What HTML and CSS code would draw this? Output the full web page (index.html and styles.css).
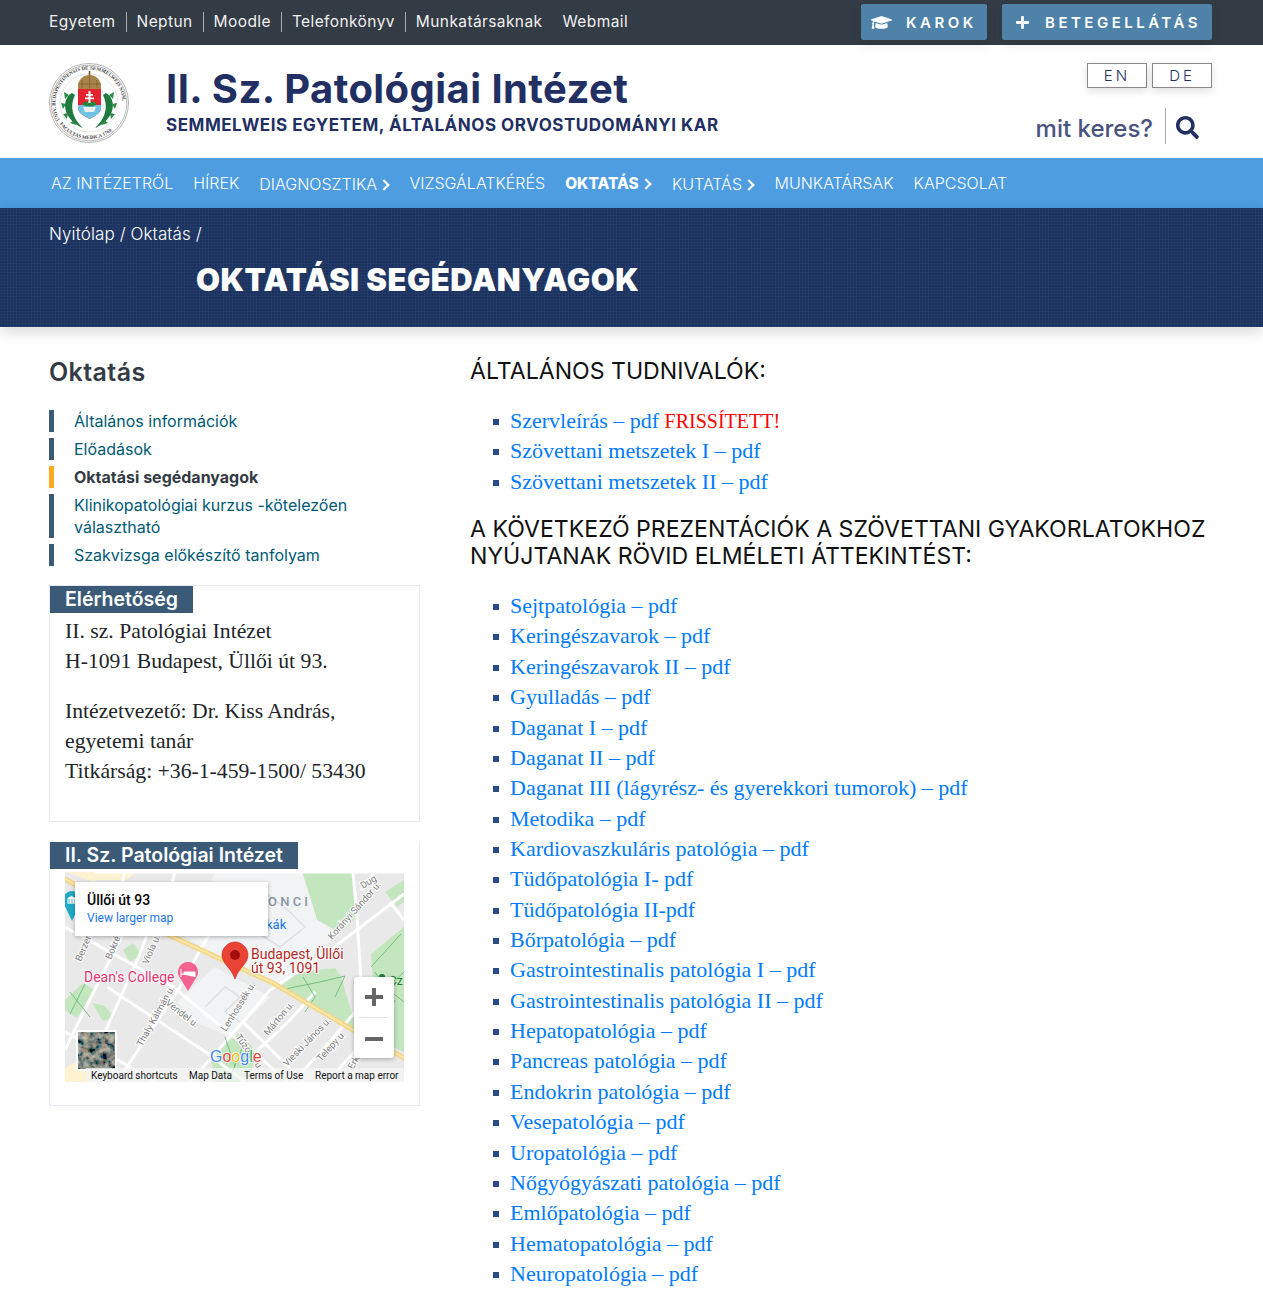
FILE: index.html
```html
<!DOCTYPE html>
<html lang="hu">
<head>
    <meta charset="utf-8">
    <title>Oktatási segédanyagok - II. Sz. Patológiai Intézet</title>
    <link rel="stylesheet" href="styles.css">
</head>
<body>

<div class="topbar">
    <ul class="toplinks">
        <li class="sep"><a href="#">Egyetem</a></li>
        <li class="sep"><a href="#">Neptun</a></li>
        <li class="sep"><a href="#">Moodle</a></li>
        <li class="sep"><a href="#">Telefonkönyv</a></li>
        <li><a href="#">Munkatársaknak</a></li>
        <li><a href="#">Webmail</a></li>
    </ul>
    <div class="topbtns">
        <a class="topbtn btn-karok" href="#">
            <svg class="cap" viewBox="0 0 640 512"><path fill="#fff" d="M622.34 153.2L343.4 67.5c-15.2-4.67-31.6-4.67-46.79 0L17.66 153.2c-23.54 7.23-23.54 38.36 0 45.59l48.63 14.94c-10.67 13.19-17.23 29.28-17.88 46.9C38.78 266.15 32 276.11 32 288c0 10.78 5.68 19.85 13.86 25.65L20.33 428.53C18.11 438.52 25.71 448 35.94 448h56.11c10.24 0 17.84-9.48 15.62-19.47L82.14 313.65C90.32 307.85 96 298.78 96 288c0-11.57-6.47-21.25-15.66-26.87.76-15.02 8.44-28.3 20.69-36.72L296.6 284.5c9.06 2.78 26.44 6.25 46.79 0l278.95-85.7c23.55-7.24 23.55-38.36 0-45.6zM352.79 315.09c-28.53 8.76-52.84 3.92-65.59 0l-145.02-44.55L128 384c0 35.35 85.96 64 192 64s192-28.65 192-64l-14.18-113.47-145.03 44.56z"/></svg>
            KAROK
        </a>
        <a class="topbtn btn-beteg" href="#">
            <svg class="plus" viewBox="0 0 448 512"><path fill="#fff" d="M416 208H272V64c0-17.67-14.33-32-32-32h-32c-17.67 0-32 14.33-32 32v144H32c-17.67 0-32 14.33-32 32v32c0 17.67 14.33 32 32 32h144v144c0 17.67 14.33 32 32 32h32c17.67 0 32-14.33 32-32V304h144c17.67 0 32-14.33 32-32v-32c0-17.67-14.33-32-32-32z"/></svg>
            BETEGELLÁTÁS
        </a>
    </div>
</div>

<header class="site-head">
    <svg class="crest" viewBox="0 0 80 80">
        <defs>
            <path id="ringtop" d="M11.750 58 A33.500 33.500 0 1 1 68.250 58"/>
            <path id="ringbot" d="M9.400 59 A36 36 0 0 0 70.600 59"/>
        </defs>
        <circle cx="40" cy="40" r="39.500" fill="#fff" stroke="#b5b5b5" stroke-width="1"/>
        <circle cx="40" cy="40" r="37.800" fill="none" stroke="#888" stroke-width=".6"/>
        <circle cx="40" cy="40" r="29" fill="none" stroke="#ccc" stroke-width=".5"/>
        <text class="crest-text"><textPath href="#ringtop" startOffset="1%">UNIV. BUDAPESTINENSIS DE SEMMELWEIS NOM.</textPath></text>
        <text class="crest-text"><textPath href="#ringbot" startOffset="3%">FACULTAS MEDICA 1769</textPath></text>
        <!-- koszoru -->
        <path d="M23 30 C12 36 13 56 34 65 C24 56 20 44 26 32z" fill="#1f7a3d"/>
        <path d="M57 30 C68 36 67 56 46 65 C56 56 60 44 54 32z" fill="#1f7a3d"/>
        <path d="M20 32l-5-3 1 7zM17 41l-5-1 2 6zM19 50l-5 1 4 5zM25 57l-4 3 6 2zM60 32l5-3-1 7zM63 41l5-1-2 6zM61 50l5 1-4 5zM55 57l4 3-6 2z" fill="#2b8a47"/>
        <!-- korona -->
        <path d="M29 26 C28 16 35 12 40.500 12 C46 12 53 16 52 26z" fill="#a88448"/>
        <path d="M33 25V17M40.500 25V13M48 25V17M29 21H52" stroke="#7d5f2f" stroke-width=".7"/>
        <rect x="39.700" y="8" width="1.600" height="4.500" fill="#7d5f2f"/>
        <!-- cimer -->
        <path d="M29 26H52V45C52 50 46 53 40.500 56C35 53 29 50 29 45z" fill="#e3232e"/>
        <path d="M29 42H52V45C52 50 46 53 40.500 56C35 53 29 50 29 45z" fill="#6fc3e6"/>
        <path d="M34 44H47L45 49H36z" fill="#eee"/>
        <ellipse cx="40.500" cy="41" rx="7" ry="2.400" fill="#22863f"/>
        <path d="M39.500 28h2v12h-2zM37 31h7v1.800h-7zM36 34.500h9v1.800h-9z" fill="#fff"/>
    </svg>
    <div class="brand">
        <h1 class="brand-title">II. Sz. Patológiai Intézet</h1>
        <p class="brand-sub">SEMMELWEIS EGYETEM, ÁLTALÁNOS ORVOSTUDOMÁNYI KAR</p>
    </div>
    <div class="head-right">
        <div class="langs">
            <a class="lang" href="#">EN</a>
            <a class="lang" href="#">DE</a>
        </div>
        <div class="search">
            <span class="search-label">mit keres?</span>
            <span class="search-btn">
                <svg viewBox="0 0 512 512"><path fill="#222f63" d="M505 442.7L405.3 343c-4.5-4.5-10.6-7-17-7H372c27.6-35.3 44-79.7 44-128C416 93.1 322.9 0 208 0S0 93.1 0 208s93.1 208 208 208c48.3 0 92.7-16.4 128-44v16.3c0 6.4 2.5 12.5 7 17l99.7 99.7c9.4 9.4 24.6 9.4 33.9 0l28.3-28.3c9.4-9.4 9.4-24.6.1-34zM208 336c-70.7 0-128-57.2-128-128 0-70.7 57.2-128 128-128 70.7 0 128 57.2 128 128 0 70.7-57.2 128-128 128z"/></svg>
            </span>
        </div>
    </div>
</header>

<nav class="mainnav">
    <a href="#">AZ INTÉZETRŐL</a>
    <a href="#">HÍREK</a>
    <a class="sub" href="#">DIAGNOSZTIKA <i class="chev"></i></a>
    <a href="#">VIZSGÁLATKÉRÉS</a>
    <a class="sub active" href="#">OKTATÁS <i class="chev"></i></a>
    <a class="sub" href="#">KUTATÁS <i class="chev"></i></a>
    <a href="#">MUNKATÁRSAK</a>
    <a href="#">KAPCSOLAT</a>
</nav>

<section class="banner">
    <div class="crumbs"><a href="#">Nyitólap</a> / <a href="#">Oktatás</a> /</div>
    <h2 class="page-title">OKTATÁSI SEGÉDANYAGOK</h2>
</section>

<div class="wrap">
    <aside class="side">
        <h3 class="side-title">Oktatás</h3>
        <ul class="sidemenu">
            <li><a href="#">Általános információk</a></li>
            <li><a href="#">Előadások</a></li>
            <li class="current"><a href="#">Oktatási segédanyagok</a></li>
            <li><a href="#">Klinikopatológiai kurzus -kötelezően választható</a></li>
            <li><a href="#">Szakvizsga előkészítő tanfolyam</a></li>
        </ul>

        <div class="card">
            <div class="card-label">Elérhetőség</div>
            <div class="card-body">
                <p>II. sz. Patológiai Intézet<br>H-1091 Budapest, Üllői út 93.</p>
                <p>Intézetvezető: Dr. Kiss András,<br>egyetemi tanár<br>Titkárság: +36-1-459-1500/ 53430</p>
            </div>
        </div>

        <div class="card card-map">
            <div class="card-label">II. Sz. Patológiai Intézet</div>
            <div class="map">
                <svg class="map-svg" viewBox="0 0 339 210" width="339" height="210">
                    <defs>
                        <filter id="aerial" x="0" y="0" width="100%" height="100%">
                            <feTurbulence type="fractalNoise" baseFrequency=".16" numOctaves="3" seed="7"/>
                            <feColorMatrix values="1 .2 0 0 -.38  .8 .4 0 0 -.36  .6 .4 .1 0 -.34  0 0 0 0 1"/>
                        </filter>
                    </defs>
                    <rect width="339" height="210" fill="#e9e9e9"/>
                    <!-- parkok -->
                    <g fill="#c3e6bf">
                        <path d="M237 0H290L292 45L275 61L252 48L245 25z"/>
                        <path d="M213 116L235 100L270 96L276 104L292 160z"/>
                        <path d="M306 82L339 55V180L328 175L312 158z"/>
                        <path d="M145 181L175 161L192 181L182 210H150z"/>
                        <path d="M0 128L18 111L29 118L12 146L0 138z"/>
                        <path d="M27 131L38 133L50 145L38 149z"/>
                        <path d="M58 78L68 71L77 83L65 90z"/>
                        <path d="M320 20L339 8V30L332 35z"/>
                    </g>
                    <!-- halvany epuletek -->
                    <g fill="#f1f3f4">
                        <path d="M150 0H237L245 25L252 48L275 61L215 112L195 108L120 65L140 30z"/>
                        <path d="M112 130L150 95L205 125L165 165L130 150z"/>
                    </g>
                    <g fill="none" stroke="#dcdfe3" stroke-width="1.500">
                        <path d="M170 50L200 20L225 40L240 55L215 75L195 62"/>
                        <path d="M140 135L160 115L175 125L160 140L175 150M190 110L165 145"/>
                    </g>
                    <!-- sargas sarkok -->
                    <g fill="#fdf3d0">
                        <path d="M0 0H30V10L0 0z"/>
                        <path d="M20 0H70L62 8H20z"/>
                        <path d="M0 196L11 190L30 210H0z"/>
                    </g>
                    <!-- utak -->
                    <g fill="none" stroke="#fff" stroke-width="3">
                        <path d="M0 55L108 115L200 190L222 210"/>
                        <path d="M42 115L142 181L180 210"/>
                        <path d="M0 160L60 192L90 210"/>
                        <path d="M18 141L55 68L72 10"/>
                        <path d="M0 178L18 141"/>
                        <path d="M58 201L115 115L135 78L158 40"/>
                        <path d="M50 210L58 201"/>
                        <path d="M90 40L75 82L40 160L25 195"/>
                        <path d="M125 210L178 150L205 118"/>
                        <path d="M180 190L225 148L250 120"/>
                        <path d="M228 210L268 166L290 140"/>
                        <path d="M262 210L300 168L312 152"/>
                        <path d="M0 25L60 58"/>
                        <path d="M205 118L268 76L339 22"/>
                        <path d="M288 0L292 45L298 140L305 160"/>
                        <path d="M310 0L296 18"/>
                        <path d="M325 30L339 48"/>
                        <path d="M60 0L55 20M110 0L104 22M30 0L340 0"/>
                        <path d="M178 150L239 210"/>
                    </g>
                    <!-- osvenyek a parkban -->
                    <g fill="none" stroke="#5fb56d" stroke-width=".8">
                        <path d="M215 118L255 110L280 104M238 105L250 125L240 140M280 104L270 125M306 95L336 62M312 125L339 100M310 100L330 130M339 130L320 115"/>
                        <path d="M5 120L25 145M20 112L5 142M160 165L170 195M180 170L165 205"/>
                    </g>
                    <!-- fout -->
                    <path d="M-2 6L108 65L208 111L288 158L341 187" fill="none" stroke="#f3d58a" stroke-width="5"/>
                    <path d="M-2 6L108 65L208 111L288 158L341 187" fill="none" stroke="#fbe6a5" stroke-width="2"/>

                    <!-- utcanevek -->
                    <g class="street">
                        <text transform="translate(16 90) rotate(-67)">Berzenczey</text>
                        <text transform="translate(46 88) rotate(-67)">Bokréta u.</text>
                        <text transform="translate(83 93) rotate(-67)">Viola u.</text>
                        <text transform="translate(77 175) rotate(-61)">Thaly Kálmán u.</text>
                        <text transform="translate(100 132) rotate(38)">Vendel u.</text>
                        <text transform="translate(161 160) rotate(-58)">Lenhossék u.</text>
                        <text transform="translate(170 165) rotate(55)">Tűzoltó u.</text>
                        <text transform="translate(203 164) rotate(-50)">Márton u.</text>
                        <text transform="translate(222 195) rotate(-46)">Vieski János u.</text>
                        <text transform="translate(256 190) rotate(-48)">Telepy u.</text>
                        <text transform="translate(267 68) rotate(-48)">Korányi Sándor u.</text>
                        <text transform="translate(298 17) rotate(-32)">Dug</text>
                        <text transform="translate(288 198) rotate(-60)">Erkel</text>
                    </g>

                    <text class="map-district" x="203" y="34">O N C I</text>
                    <text class="map-blue" x="201" y="57">kák</text>

                    <!-- muzeum jelolo -->
                    <path d="M7 19a9 9 0 0 1 8 13L7 49L-1 32a9 9 0 0 1 8-13z" fill="#1fa9c4"/>
                    <path d="M2 32h9v-6l-4.500-2.500L2 26zM4 27v4M7 27v4M10 27v4" fill="#fff" stroke="#1fa9c4" stroke-width=".8"/>

                    <!-- szallas jelolo -->
                    <path d="M123 90a10 10 0 0 1 8 16L123 119L115 106a10 10 0 0 1 8-16z" fill="#f4638f"/>
                    <path d="M116 97v8M116 102h14v3M119 100h11v2h-11z" fill="#fff" stroke="#fff" stroke-width="1"/>
                    <text class="map-pink" x="19" y="110">Dean's College</text>

                    <!-- cim jelolo -->
                    <path d="M170 70c7 0 13 6 13 13c0 9-9 12-13 24c-4-12-13-15-13-24c0-7 6-13 13-13z" fill="#ea4335" stroke="#c5221f" stroke-width=".6"/>
                    <circle cx="170" cy="83" r="5" fill="#a50e0e"/>
                    <text class="map-red" x="186" y="87">Budapest, Üllői</text>
                    <text class="map-red" x="186" y="101">út 93, 1091</text>

                    <circle cx="317" cy="105" r="3" fill="#188038"/>
                    <text class="map-green" x="324" y="113">Cz</text>

                    <!-- google -->
                    <text class="map-google" x="145" y="190"><tspan fill="#4285f4">G</tspan><tspan fill="#ea4335">o</tspan><tspan fill="#fbbc05">o</tspan><tspan fill="#4285f4">g</tspan><tspan fill="#34a853">l</tspan><tspan fill="#ea4335">e</tspan></text>

                    <!-- muhold kep -->
                    <rect x="11" y="158" width="41" height="41" rx="2" fill="#fff"/>
                    <rect x="13" y="160" width="37" height="37" filter="url(#aerial)"/>

                    <!-- attribucio -->
                    <rect x="21" y="196" width="318" height="14" fill="#f5f5f5" fill-opacity=".75"/>
                    <g class="map-attr">
                        <text x="26" y="207">Keyboard shortcuts</text>
                        <text x="124" y="207">Map Data</text>
                        <text x="179" y="207">Terms of Use</text>
                        <text x="250" y="207">Report a map error</text>
                    </g>
                </svg>
                <div class="map-popup">
                    <strong>Üllői út 93</strong>
                    <a href="#">View larger map</a>
                </div>
                <div class="zoomctl">
                    <span class="zoom-plus"></span>
                    <span class="zoom-line"></span>
                    <span class="zoom-minus"></span>
                </div>
            </div>
        </div>
    </aside>

    <main class="content">
        <h4>ÁLTALÁNOS TUDNIVALÓK:</h4>
        <ul class="doclist">
            <li><a href="#">Szervleírás – pdf</a> <span class="fresh">FRISSÍTETT!</span></li>
            <li><a href="#">Szövettani metszetek I – pdf</a></li>
            <li><a href="#">Szövettani metszetek II – pdf</a></li>
        </ul>
        <h4>A KÖVETKEZŐ PREZENTÁCIÓK A SZÖVETTANI GYAKORLATOKHOZ NYÚJTANAK RÖVID ELMÉLETI ÁTTEKINTÉST:</h4>
        <ul class="doclist">
            <li><a href="#">Sejtpatológia – pdf</a></li>
            <li><a href="#">Keringészavarok – pdf</a></li>
            <li><a href="#">Keringészavarok II – pdf</a></li>
            <li><a href="#">Gyulladás – pdf</a></li>
            <li><a href="#">Daganat I – pdf</a></li>
            <li><a href="#">Daganat II – pdf</a></li>
            <li><a href="#">Daganat III (lágyrész- és gyerekkori tumorok) – pdf</a></li>
            <li><a href="#">Metodika – pdf</a></li>
            <li><a href="#">Kardiovaszkuláris patológia – pdf</a></li>
            <li><a href="#">Tüdőpatológia I- pdf</a></li>
            <li><a href="#">Tüdőpatológia II-pdf</a></li>
            <li><a href="#">Bőrpatológia – pdf</a></li>
            <li><a href="#">Gastrointestinalis patológia I – pdf</a></li>
            <li><a href="#">Gastrointestinalis patológia II – pdf</a></li>
            <li><a href="#">Hepatopatológia – pdf</a></li>
            <li><a href="#">Pancreas patológia – pdf</a></li>
            <li><a href="#">Endokrin patológia – pdf</a></li>
            <li><a href="#">Vesepatológia – pdf</a></li>
            <li><a href="#">Uropatológia – pdf</a></li>
            <li><a href="#">Nőgyógyászati patológia – pdf</a></li>
            <li><a href="#">Emlőpatológia – pdf</a></li>
            <li><a href="#">Hematopatológia – pdf</a></li>
            <li><a href="#">Neuropatológia – pdf</a></li>
        </ul>
    </main>
</div>

</body>
</html>
```

FILE: styles.css
```css
* {
    box-sizing: border-box;
}

body {
    margin: 0;
    font-family: "Liberation Serif", serif;
    font-size: 22px;
    color: #212529;
    background-color: #fff;
}

a {
    color: inherit;
    text-decoration: none;
}

/* felso sav */
.topbar {
    height: 45px;
    background-color: #333b44;
    padding: 4px 51px 0 49px;
    display: flex;
    justify-content: space-between;
    font-family: Inter, "Liberation Sans", sans-serif;
}

.toplinks {
    display: flex;
    align-items: flex-start;
    list-style: none;
    margin: 8px 0 0;
    padding: 0;
    font-size: 15.5px;
    line-height: 20px;
    color: #f0f0f0;
    letter-spacing: .4px;
}

.toplinks li {
    padding-right: 10px;
    margin-right: 10px;
}

.toplinks li.sep {
    border-right: 1px solid #aab;
}

.topbtns {
    display: flex;
    gap: 15px;
}

.topbtn {
    height: 36px;
    border-radius: 2px;
    background-color: #4e82a8;
    color: #fff;
    font-size: 15px;
    font-weight: 600;
    letter-spacing: 3.5px;
    display: flex;
    align-items: center;
    box-shadow: 0 6px 12px rgba(0,0,0,0.07);
}

.btn-karok {
    width: 126px;
    padding-left: 10px;
    gap: 14px;
}

.btn-beteg {
    width: 210px;
    padding-left: 14px;
    gap: 16px;
}

.cap {
    width: 21px;
    height: 17px;
}

.plus {
    width: 13px;
    height: 15px;
}

/* fejlec */
.site-head {
    height: 113px;
    display: flex;
    padding: 18px 51px 0 49px;
    font-family: Inter, "Liberation Sans", sans-serif;
}

.crest {
    width: 80px;
    height: 80px;
    flex: none;
}

.crest-text {
    font-family: "Liberation Serif", serif;
    font-size: 5px;
    font-weight: 700;
    fill: #444;
}

.brand {
    margin-left: 37px;
    flex: 1;
}

.brand-title {
    margin: 1px 0 0;
    font-size: 40px;
    line-height: 50px;
    font-weight: 700;
    color: #222f63;
    letter-spacing: .43px;
}

.brand-sub {
    margin: 0;
    font-size: 17px;
    line-height: 22px;
    font-weight: 700;
    color: #222f63;
    letter-spacing: .53px;
}

.head-right {
    display: flex;
    flex-direction: column;
    align-items: flex-end;
}

.langs {
    display: flex;
    gap: 5px;
}

.lang {
    width: 60px;
    height: 25px;
    border: 1px solid #888;
    color: #222f63;
    font-size: 15px;
    font-weight: 300;
    letter-spacing: 3px;
    text-align: center;
    line-height: 23px;
    box-shadow: 0 3px 8px rgba(0,0,0,0.13);
}

.search {
    display: flex;
    align-items: center;
    margin-top: 20px;
    padding-right: 13px;
    height: 36px;
}

.search-label {
    font-size: 24px;
    font-weight: 500;
    color: #4a5280;
    padding: 4px 12px 0 0;
}

.search-btn {
    display: flex;
    align-items: center;
    height: 36px;
    padding-left: 10px;
    border-left: 1px solid #aaa;
}

.search-btn svg {
    width: 23px;
    height: 23px;
    margin-top: 2px;
}

/* fomenu */
.mainnav {
    height: 50px;
    background-color: #4d9de0;
    display: flex;
    align-items: center;
    gap: 20px;
    padding-left: 51px;
    font-family: Inter, "Liberation Sans", sans-serif;
    font-size: 16px;
    font-weight: 300;
    color: #fff;
    line-height: 20px;
}

.mainnav .sub {
    position: relative;
    top: 1px;
}

.mainnav .active {
    font-weight: 800;
    font-size: 15.4px;
}

.chev {
    display: inline-block;
    width: 8px;
    height: 8px;
    border-top: 2px solid #fff;
    border-right: 2px solid #fff;
    transform: rotate(45deg);
    margin: 0 2px 1px -2px;
}

.mainnav .active .chev {
    margin-left: 0;
}

/* cim sav */
.banner {
    height: 119px;
    padding: 16px 49px 0;
    color: #fff;
    background-color: #1b3260;
    background-image: radial-gradient(rgba(255,255,255,0.04) 1px, transparent 1.2px);
    background-size: 3px 3px;
    box-shadow: 0 5px 14px rgba(0,0,0,0.15);
    font-family: Inter, "Liberation Sans", sans-serif;
}

.crumbs {
    font-size: 17px;
    line-height: 20px;
    font-weight: 300;
    letter-spacing: .1px;
}

.page-title {
    margin: 18px 0 0 147px;
    font-size: 31px;
    line-height: 36px;
    font-weight: 900;
    letter-spacing: .5px;
}

/* tartalom */
.wrap {
    display: flex;
    padding: 0 51px 0 49px;
}

.side {
    width: 371px;
    flex: none;
    font-family: Inter, "Liberation Sans", sans-serif;
}

.side-title {
    margin: 29px 0 0;
    font-size: 25px;
    line-height: 32px;
    font-weight: 600;
    color: #333b44;
    letter-spacing: .4px;
}

.sidemenu {
    list-style: none;
    margin: 22px 0 0;
    padding: 0;
    font-size: 16px;
    line-height: 22px;
    color: #005a74;
}

.sidemenu li {
    border-left: 5px solid #3a5a78;
    padding-left: 20px;
    margin-bottom: 6px;
}

.sidemenu li.current {
    border-left-color: #ffa91f;
    color: #333b44;
    font-weight: 700;
}

.card {
    border: 1px solid #e8e8ee;
    margin-top: 19px;
}

.card-label {
    display: table;
    background-color: #3a5a78;
    color: #fff;
    font-size: 19.5px;
    line-height: 27px;
    font-weight: 600;
    padding: 0 15px;
}

.card-body {
    padding: 3px 15px 15px;
    font-family: "Liberation Serif", serif;
    font-size: 21.7px;
    line-height: 30px;
}

.card-body p {
    margin: 0 0 20px;
}

.card-map {
    margin-top: 20px;
    border-top: 0;
    height: 264px;
}

.map {
    position: relative;
    width: 339px;
    height: 210px;
    margin: 3px 0 0 15px;
    overflow: hidden;
    font-family: Roboto, sans-serif;
}

.map-svg {
    display: block;
}

.street {
    font-family: Roboto, sans-serif;
    font-size: 9.500px;
    fill: #7c7c7c;
    stroke: #fff;
    stroke-width: 2px;
    paint-order: stroke;
}

.map-district {
    font-family: Roboto, sans-serif;
    font-size: 13px;
    font-weight: 500;
    fill: #8a93a6;
}

.map-blue {
    font-family: Roboto, sans-serif;
    font-size: 13px;
    fill: #1a73e8;
}

.map-pink {
    font-family: Roboto, sans-serif;
    font-size: 14px;
    fill: #e5326f;
    stroke: #fff;
    stroke-width: 2px;
    paint-order: stroke;
}

.map-red {
    font-family: Roboto, sans-serif;
    font-size: 14px;
    fill: #b3261e;
    stroke: #fff;
    stroke-width: 2px;
    paint-order: stroke;
}

.map-green {
    font-family: Roboto, sans-serif;
    font-size: 12px;
    fill: #188038;
}

.map-google {
    font-family: "Liberation Sans", sans-serif;
    font-size: 16px;
    stroke: #fff;
    stroke-width: 1.500px;
    paint-order: stroke;
}

.map-attr {
    font-family: Roboto, sans-serif;
    font-size: 10px;
    fill: #111;
}

.map-popup {
    position: absolute;
    left: 10px;
    top: 10px;
    width: 193px;
    height: 54px;
    background-color: #fff;
    box-shadow: 0 1px 4px rgba(0,0,0,0.3);
    padding: 10px 12px;
    display: flex;
    flex-direction: column;
}

.map-popup strong {
    font-size: 14px;
    line-height: 17px;
    font-weight: 500;
    color: #000;
}

.map-popup a {
    font-size: 12px;
    line-height: 19px;
    color: #1a73e8;
}

.zoomctl {
    position: absolute;
    left: 289px;
    top: 105px;
    width: 40px;
    height: 81px;
    background-color: #fff;
    border-radius: 2px;
    box-shadow: 0 1px 4px rgba(0,0,0,0.3);
    display: flex;
    flex-direction: column;
    align-items: center;
}

.zoom-plus {
    width: 18px;
    height: 18px;
    margin-top: 11px;
    background: linear-gradient(#666,#666) center / 100% 4px no-repeat,
                linear-gradient(#666,#666) center / 4px 100% no-repeat;
}

.zoom-line {
    width: 30px;
    height: 1px;
    margin-top: 11px;
    background-color: #e6e6e6;
}

.zoom-minus {
    width: 18px;
    height: 4px;
    margin-top: 19px;
    background-color: #666;
}

.content {
    flex: 1;
    margin-left: 50px;
    padding-top: 31px;
}

.content h4 {
    margin: 0;
    font-family: Inter, "Liberation Sans", sans-serif;
    font-size: 23.1px;
    line-height: 27px;
    font-weight: 400;
    color: #111;
}

.doclist {
    list-style: none;
    margin: 21px 0 19px;
    padding: 0 0 0 40px;
    line-height: 30.36px;
    color: #007bff;
}

.doclist li {
    position: relative;
}

.doclist li::before {
    content: "";
    position: absolute;
    left: -17px;
    top: 13px;
    width: 6px;
    height: 6px;
    background-color: #2a4a8a;
}

.fresh {
    color: #f00;
    font-size: 20px;
}
```
